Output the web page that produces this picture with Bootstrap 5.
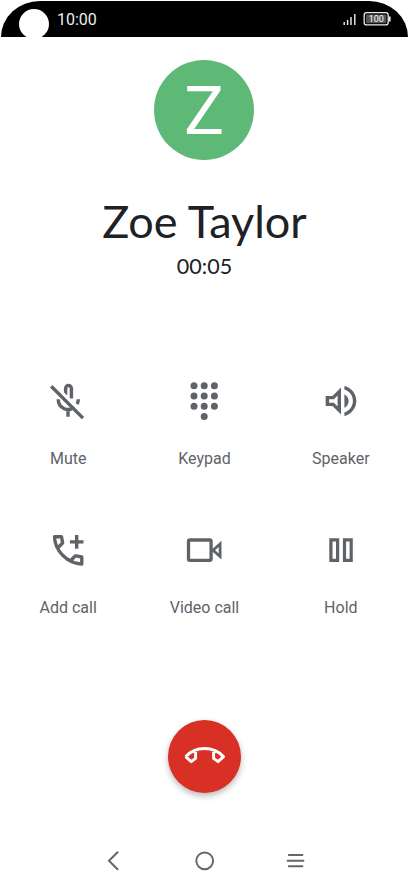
<!DOCTYPE html>
<html lang="en">
<head>
<meta charset="utf-8">
<meta name="viewport" content="width=device-width, initial-scale=1">
<title>Call</title>
<link href="https://cdn.jsdelivr.net/npm/bootstrap@5.3.0/dist/css/bootstrap.min.css" rel="stylesheet">
<style>
body{font-family:Roboto,sans-serif;color:#5f6368;background:#fff}
.phone{width:409px;height:888px}
.status-bar{height:36px;margin:1px 1px 0;background:#000;border-radius:39px 39px 0 0/36px 36px 0 0;color:#eee}
.camera{width:30px;height:30px;margin:8px 0 0 18px}
.clock{font-size:16px;line-height:37px;margin-left:8px}
.avatar{width:100px;height:100px;margin-top:23px;margin-right:1px;background:#5db975;font-size:67px;line-height:1;padding-top:2px}
.caller{font-family:Lato,sans-serif;font-size:45px;line-height:54px;margin-top:34px;color:#202124}
.timer{font-family:Lato,sans-serif;font-size:21.5px;line-height:26px;margin-top:5px;color:#202124}
.actions{margin-top:98px}
.action{height:149px;color:#5f6368;font-size:16px;line-height:24px}
.action svg{width:48px;height:48px;margin-bottom:22px}
.end-call{width:73px;height:73px;margin-top:44.5px;background:#d93025;box-shadow:0 3px 6px rgba(0,0,0,.28)}
.nav-keys{margin-top:56.5px;padding:0 101px}
</style>
</head>
<body>
<div class="phone d-flex flex-column overflow-hidden">
  <header class="status-bar d-flex flex-shrink-0 overflow-hidden">
    <span class="camera rounded-circle bg-white flex-shrink-0"></span>
    <span class="clock">10:00</span>
    <svg class="ms-auto me-3" width="50" height="36" viewBox="342 1 50 36">
      <path d="M344.2 22v3M347.6 20v5M351 17v8M354.8 14v11" stroke="#eee" stroke-width="1.4"/>
      <rect x="364.2" y="12.7" width="24" height="12.2" rx="2.5" fill="#000" stroke="#eee" stroke-width="1.3"/>
      <rect x="366" y="14.4" width="20.4" height="8.8" rx="1" fill="#555"/>
      <path d="M389.7 16.5v5" stroke="#eee" stroke-width="1.8"/>
      <text x="376.3" y="22.1" text-anchor="middle" font-size="9" font-family="Roboto" fill="#fff">100</text>
    </svg>
  </header>
  <main class="d-flex flex-column align-items-center">
    <div class="avatar rounded-circle text-white d-flex align-items-center justify-content-center">Z</div>
    <h1 class="caller fw-normal mb-0">Zoe Taylor</h1>
    <div class="timer">00:05</div>
    <div class="actions row g-0 w-100">
      <button class="action col-4 btn border-0 p-0 d-flex flex-column align-items-center">
        <svg viewBox="44 377 48 48" fill="none" stroke="currentColor" stroke-width="3.4">
          <path d="M65.6 395V388.4a2.9 2.9 0 0 1 5.8 0V398.5M58.2 399.3a9.9 10.2 0 0 0 16 8M78.3 399.3q0 2.6-1.2 4.8M68 410v6.8"/>
          <path d="M54.6 384.6l31 31" stroke="#fff" stroke-width="2.2"/>
          <path d="M51.2 386.2l31.8 31.9"/>
        </svg>
        <span>Mute</span>
      </button>
      <button class="action col-4 btn border-0 p-0 d-flex flex-column align-items-center">
        <svg viewBox="180.4 377 48 48" fill="none" stroke="currentColor" stroke-width="7" stroke-linecap="round">
          <path d="M194.4 385.8h0M204.6 385.8h0M214.8 385.8h0M194.4 396h0M204.6 396h0M214.8 396h0M194.4 406.2h0M204.6 406.2h0M214.8 406.2h0M204.6 416.4h0"/>
        </svg>
        <span>Keypad</span>
      </button>
      <button class="action col-4 btn border-0 p-0 d-flex flex-column align-items-center">
        <svg viewBox="-2.1 -2.1 28.2 28.2" fill="currentColor">
          <path d="M3 9v6h4l5 5V4L7 9H3zm7-.17v6.34L7.83 13H5v-2h2.83L10 8.83zM16.5 12c0-1.77-1.02-3.29-2.5-4.03v8.05c1.48-.73 2.5-2.25 2.5-4.02zM14 3.23v2.06c2.89.86 5 3.54 5 6.71s-2.11 5.85-5 6.71v2.06c4.01-.91 7-4.49 7-8.77s-2.99-7.86-7-8.77z"/>
        </svg>
        <span>Speaker</span>
      </button>
      <button class="action col-4 btn border-0 p-0 d-flex flex-column align-items-center">
        <svg viewBox="-2.2 -2.3 28.2 28.2" fill="currentColor">
          <path d="M19.95 21q-3.125 0-6.175-1.363-3.05-1.362-5.55-3.862-2.5-2.5-3.863-5.55Q3 7.175 3 4.05q0-.45.3-.75t.75-.3H8.1q.35 0 .625.238.275.237.325.562l.65 3.5q.05.4-.025.675-.075.275-.275.475L6.975 10.9q.5.925 1.187 1.787.688.863 1.513 1.663.775.775 1.625 1.438.85.662 1.8 1.212l2.35-2.35q.225-.225.588-.338.362-.112.712-.062l3.45.7q.35.1.575.363.225.262.225.587v4.05q0 .45-.3.75t-.75.3ZM6.025 9l1.65-1.65L7.25 5H5.025q.125 1.025.35 2.025.225 1 .65 1.975Zm8.95 8.95q.975.425 1.988.675 1.012.25 2.037.325v-2.2l-2.35-.475Z"/>
          <path d="M16 3h2v3h3v2h-3v3h-2V8h-3V6h3z"/>
        </svg>
        <span>Add call</span>
      </button>
      <button class="action col-4 btn border-0 p-0 d-flex flex-column align-items-center">
        <svg viewBox="180.4 526 48 48" fill="none" stroke="currentColor" stroke-width="3.3">
          <rect x="188.9" y="540" width="22.6" height="20.4" rx="1.4"/>
          <path d="M213.4 550.2l7.1-6.3v12.6z" stroke-width="2.8"/>
        </svg>
        <span>Video call</span>
      </button>
      <button class="action col-4 btn border-0 p-0 d-flex flex-column align-items-center">
        <svg viewBox="316.8 526 48 48" fill="none" stroke="currentColor" stroke-width="3.2">
          <path d="M330.7 539.9h6.7v20.5h-6.7zM344.3 539.9h6.7v20.5h-6.7z"/>
        </svg>
        <span>Hold</span>
      </button>
    </div>
    <button class="end-call btn border-0 p-0 rounded-circle d-flex align-items-center justify-content-center" aria-label="End call">
      <svg width="48" height="48" viewBox="180.5 732 48 48" fill="none" stroke="#fff" stroke-width="2.9" stroke-linejoin="round">
        <path d="M185.1 756.7C195 745.8 213.2 745.8 223.1 756.7L217.5 761.7L213.1 758.4V750.8M185.1 756.7L190.7 761.7L195.1 758.4V750.8"/>
      </svg>
    </button>
  </main>
  <footer class="nav-keys d-flex justify-content-between">
    <svg width="24" height="24" viewBox="101 849 24 24" fill="none" stroke="#666" stroke-width="2" stroke-linecap="round"><path d="M117.5 852.3l-8.5 8.5 8.5 8.5"/></svg>
    <svg width="24" height="24" viewBox="192.5 849 24 24" fill="none" stroke="#666" stroke-width="2"><circle cx="204.2" cy="860.8" r="8.4"/></svg>
    <svg width="24" height="24" viewBox="284 849 24 24" fill="none" stroke="#666" stroke-width="2" stroke-linecap="round"><path d="M288.8 855.1h13.6M287.6 860.7h15.8M288.8 866.3h13.6"/></svg>
  </footer>
</div>
<script src="https://cdn.jsdelivr.net/npm/bootstrap@5.3.0/dist/js/bootstrap.bundle.min.js"></script>
</body>
</html>
